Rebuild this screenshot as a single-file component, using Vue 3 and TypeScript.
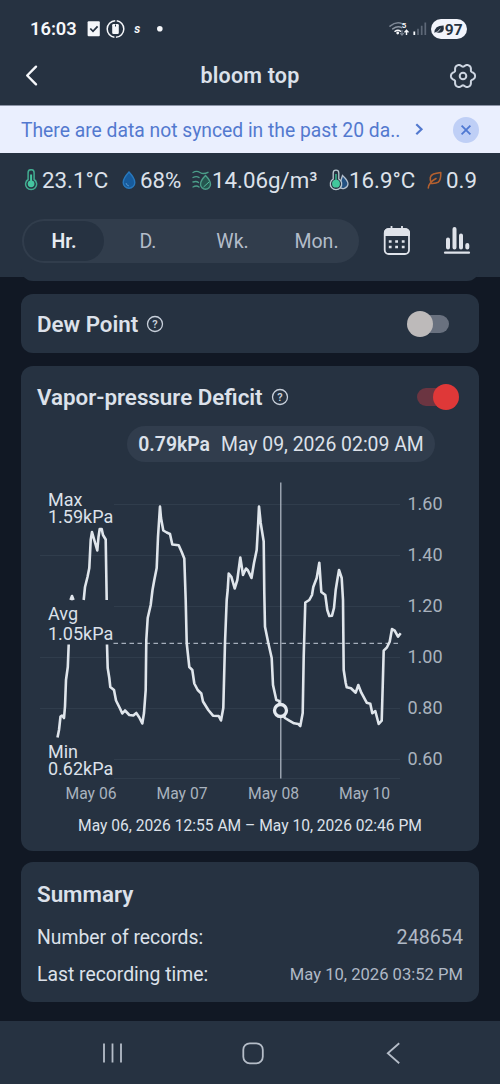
<script setup lang="ts">
import { computed, ref } from 'vue'

const tabs = ['Hr.', 'D.', 'Wk.', 'Mon.']
const activeTab = ref('Hr.')

const grid = [
  { y: 504, x: 114, label: '1.60' },
  { y: 555, x: 40, label: '1.40' },
  { y: 606, x: 114, label: '1.20' },
  { y: 657, x: 40, label: '1.00' },
  { y: 708, x: 40, label: '0.80' },
  { y: 759, x: 114, label: '0.60' },
]
const days = [
  { x: 91, label: 'May 06' },
  { x: 182, label: 'May 07' },
  { x: 273.5, label: 'May 08' },
  { x: 364.5, label: 'May 10' },
]
const series: number[][][] = [
  [[57.5, 737.5], [59, 730], [60.5, 716.5], [62, 715.5], [64, 718], [65, 706.5], [66, 680], [67.8, 667], [68.7, 644.5]],
  [[70.5, 600], [72, 596], [73.5, 600]],
  [[83.7, 600], [85, 587], [87.5, 577], [89.3, 568], [90.7, 540], [92, 532], [94.7, 541.5], [97.3, 550.5], [98.5, 537], [99.7, 529], [101.7, 529], [103, 535], [105.7, 539.5], [106.7, 600]],
  [
    [107, 644.5], [107.7, 668], [109.3, 678], [110.3, 687], [114, 690], [116, 700.5], [120, 708.5], [122.3, 713.5], [125, 710.5], [129.3, 715], [133.3, 715.5], [136.3, 713], [139.3, 717.5], [142.3, 723.5], [144, 713], [145.7, 690], [146.3, 640], [147.7, 618], [150.7, 605], [152.5, 590],
    [154.3, 580], [156.7, 568], [158, 537], [159.3, 517], [160, 506.5], [161, 518], [163.3, 530.5], [166.7, 532.5], [170, 534], [172.3, 544.5], [178.7, 545.3], [181.7, 552], [184.3, 558.5], [185.7, 600],
    [186.7, 643], [189.3, 667], [192.3, 670], [194.3, 683.5], [197.7, 690], [201.3, 693.5], [203, 701.5], [208.3, 710], [213, 715.7], [218.7, 716], [221, 720.5], [223.3, 708], [225, 643], [226.7, 600],
    [227.7, 590], [228.7, 573.5], [231.3, 576.7], [234.7, 588.5], [237.3, 580], [240.3, 557.5], [243, 575], [246, 568.5], [248, 570.5], [251.5, 578], [254, 563], [256.7, 550], [258, 526.7], [259, 506.5], [260.7, 523], [263.7, 541.5], [264.3, 593],
    [265, 626.7], [268.3, 643], [271.7, 658], [273, 685], [276.3, 700], [279.3, 701], [280.5, 710], [285, 718], [289.3, 720.7], [294, 723.3], [298.3, 724], [300.3, 726], [302.7, 713], [303.7, 657], [305.3, 602.5], [309.3, 600], [312, 595], [313.3, 587], [316.7, 578], [319.3, 562.7],
    [321.3, 592], [325.3, 595], [327.3, 610], [329.3, 616], [332, 615.7], [334, 608], [335.7, 590], [337.3, 580], [339, 570], [341.7, 578], [343, 600],
    [343.7, 670], [345.7, 683], [346.7, 687.3], [351, 688.3], [355.7, 692.7], [358.3, 685], [361.3, 692.7], [366.7, 702.7], [370.3, 703.7], [372.3, 713.3], [375.3, 711], [378.7, 724], [381.7, 720.7], [382.7, 686.7], [383.7, 650.7], [387, 647.3], [389.7, 641.7], [392, 629], [394.7, 630.7], [398, 636.7], [400.7, 633.3],
  ],
]
const linePath = computed(() =>
  series.map((part) => 'M' + part.map((p) => p.join(' ')).join('L')).join(''),
)

// Six-lobed cog outline
const gearPath = 'M' + Array.from({ length: 120 }, (_, i) => {
  const t = (i * Math.PI) / 60
  const r = 10.9 + 1.35 * Math.cos(6 * t) - 0.2 * Math.cos(12 * t)
  return `${(r * Math.cos(t)).toFixed(2)} ${(r * Math.sin(t)).toFixed(2)}`
}).join('L') + 'Z'
</script>

<template>
  <div class="screen">
    <header class="top">
      <div class="status">
        <span class="clock">16:03</span>
        <svg class="status-left" width="80" height="22" viewBox="85 18 80 22">
          <rect x="87.6" y="21.3" width="12.2" height="15" rx="1" fill="#f5f7fa" />
          <path d="M90.3 28.5l2.7 2.8 4.6-5" fill="none" stroke="#263241" stroke-width="1.8" />
          <circle cx="115.5" cy="29" r="8.3" fill="none" stroke="#f5f7fa" stroke-width="1.5" stroke-dasharray="24.5 1.57" stroke-dashoffset="12" />
          <rect x="112.2" y="24" width="6.6" height="10" rx="1.2" fill="#f5f7fa" />
          <path d="M115.5 24.5v2" stroke="#263241" stroke-width="1" />
          <text x="134.2" y="32.7" class="s-mark">s</text>
          <circle cx="159.8" cy="28.8" r="2.8" fill="#f5f7fa" />
        </svg>
        <svg class="status-right" width="80" height="22" viewBox="388 18 80 22">
          <g fill="none" stroke-linecap="round" stroke-width="1.5">
            <path d="M390 26.2q6-5 12 -2.600" stroke="#7d8795" />
            <path d="M392.7 28.9q5-3.600 9-1.200" stroke="#8d96a3" />
            <path d="M395 31.3q3-2.2 5.500 0" stroke="#f5f7fa" />
          </g>
          <circle cx="397.7" cy="33" r="1.4" fill="#f5f7fa" />
          <text x="401.8" y="28.2" class="wifi-gen">5</text>
          <path d="M402 30v5m-1.8-1.8l1.8 2 1.8-2" fill="none" stroke="#7d8795" stroke-width="1.1" />
          <path d="M406.5 35v-4.6m-2 2l2-2.2 2 2.2" fill="none" stroke="#f5f7fa" stroke-width="1.4" />
          <path d="M414.3 31.5v3.5" stroke="#f5f7fa" stroke-width="1.8" />
          <path d="M418 28.8V35M421.7 25.7V35M425.3 22.5V35" stroke="#5d6877" stroke-width="1.7" />
          <rect x="431" y="19" width="36" height="20" rx="10" fill="#f2f4fb" />
          <path d="M434.3 33q.2-7.5 9.3-7.4 1.3 7.4-4.3 7.2-2.2-.3-5 .2z" fill="#263241" />
          <path d="M434 33.3q3.8-.7 6.4-4.3" fill="none" stroke="#f2f4fb" stroke-width=".9" />
          <text x="444.8" y="34.6" class="battery">97</text>
        </svg>
      </div>
      <div class="title-bar">
        <svg width="16" height="24" viewBox="0 0 16 24"><path d="M12 2.700L3.2 11.500 12 20.300" fill="none" stroke="#f5f7fa" stroke-width="2.4" stroke-linejoin="round" stroke-linecap="round" /></svg>
        <h1>bloom top</h1>
        <svg width="28" height="28" viewBox="-14 -14 28 28">
          <g fill="none" stroke="#cdd5e1" stroke-width="2" stroke-linejoin="round">
            <path :d="gearPath" />
            <circle r="3.300" />
          </g>
        </svg>
      </div>
    </header>

    <div class="banner">
      <span class="banner-text">There are data not synced in the past 20 da..</span>
      <svg class="banner-arrow" width="12" height="16" viewBox="0 0 12 16"><path d="M3.300 2.300l5.2 5L3.300 12.300" fill="none" stroke="#5379cf" stroke-width="2.200" /></svg>
      <button class="close"><svg width="26" height="26" viewBox="0 0 26 26"><path d="M8.6 8.6l8.8 8.8M17.4 8.6l-8.8 8.8" stroke="#4f78d2" stroke-width="1.8" /></svg></button>
    </div>

    <section class="controls">
      <div class="metrics">
        <svg width="16" height="22" viewBox="23 168.500 16 22">
          <path d="M28.1 179v-6.8a3 3 0 0 1 6 0v6.8a5.5 5.5 0 1 1-6 0z" fill="#263241" stroke="#42ac91" stroke-width="1.5" />
          <path d="M31.1 174v8" stroke="#45c5a0" stroke-width="2" /><circle cx="31.1" cy="183.3" r="3.4" fill="#45c5a0" />
        </svg>
        <span class="m1">23.1°C</span>
        <svg class="i2" width="14" height="20" viewBox="122 169 14 20"><path d="M129 171q5.8 6.2 5.8 10.5a5.8 5.8 0 0 1-11.6 0Q123.200 177.200 129 171z" fill="#175b9c" stroke="#2778bd" stroke-width="1.4" /><path d="M126 182q.5 2.600 3 3" fill="none" stroke="#5797ce" stroke-width=".9" /></svg>
        <span class="m2">68%</span>
        <svg class="i3" width="20" height="22" viewBox="192 168 20 22">
          <g fill="none" stroke="#4b9d89" stroke-width="1.4" stroke-linecap="round">
            <path d="M193 171.500q3.500-2.200 7 0t8-.2M193 176.500q3.500-1.800 6 0M193 181q3.500-1.200 5.500 .5M193 186q3.500-2 6 0" />
            <path d="M205.500 174.500q5 5 5 8.800a5 5 0 0 1-10 0q0-3.800 5-8.800z" fill="#24554f" />
          </g>
          <path d="M203.500 186l5.500-5" stroke="#53bea0" stroke-width="1" />
        </svg>
        <span class="m3">14.06g/m³</span>
        <svg class="i4" width="20" height="22" viewBox="329 168 20 22">
          <path d="M342.500 174.500q5.500 5 5.500 8.500a5 5 0 0 1-9 2.500z" fill="#235181" stroke="#b3bfcd" stroke-width="1.300" />
          <path d="M333.200 178v-6a2.800 2.800 0 0 1 5.600 0v6a5.700 5.700 0 1 1-5.600 0z" fill="#263241" stroke="#b9c7cf" stroke-width="1.300" />
          <path d="M336 173v9" stroke="#35ad87" stroke-width="1.600" /><circle cx="336" cy="182.700" r="3.900" fill="#42c89c" />
        </svg>
        <span class="m4">16.9°C</span>
        <svg class="i5" width="16" height="20" viewBox="428.500 169 16 20"><path d="M432.800 182.500q-3-7.500 2.200-9.500 2.500-.8 7.300-1.500.2 7.500-2.500 9.700-2 1.500-7 1.300zM429.800 187q.3-5.500 7.700-9.500" fill="none" stroke="#b4602f" stroke-width="1.600" stroke-linecap="round" stroke-linejoin="round" /></svg>
        <span class="m5">0.9</span>
      </div>
      <div class="range">
        <div class="tabs">
          <button v-for="tab in tabs" :key="tab" :class="{ active: tab === activeTab }" @click="activeTab = tab">{{ tab }}</button>
        </div>
        <svg class="calendar" width="28" height="30" viewBox="383 226 28 30">
          <rect x="384.700" y="229" width="24.300" height="25" rx="4" fill="none" stroke="#dfe3ea" stroke-width="1.800" />
          <path d="M384 236v-3q0-4.500 4.500-4.500h17q4.500 0 4.500 4.500v3z" fill="#dfe3ea" />
          <path d="M391.500 226v4M402 226v4" stroke="#dfe3ea" stroke-width="1.800" />
          <path d="M388.800 241.500h2.800m3.600 0h2.800m3.800 0h2.800M388.800 247h2.800m3.600 0h2.800m3.800 0h2.800" stroke="#dfe3ea" stroke-width="2.600" />
        </svg>
        <svg class="bars" width="28" height="30" viewBox="443 226 28 30">
          <path d="M448 239.500v8M454.500 229v18.500M461 235.500v12M467.300 245v2.500" stroke="#dfe3ea" stroke-width="4" stroke-linecap="round" />
          <path d="M445 252.700h24" stroke="#dfe3ea" stroke-width="2.200" stroke-linecap="round" />
        </svg>
      </div>
    </section>

    <main>
      <div class="peek"></div>
      <section class="card dew">
        <h2>Dew Point</h2>
        <svg class="help" width="18" height="18" viewBox="0 0 18 18"><circle cx="9" cy="9" r="7.500" /><text x="9" y="13">?</text></svg>
        <span class="switch"><i></i></span>
      </section>

      <section class="card vpd">
        <div class="card-head">
          <h2>Vapor-pressure Deficit</h2>
          <svg class="help" width="18" height="18" viewBox="0 0 18 18"><circle cx="9" cy="9" r="7.500" /><text x="9" y="13">?</text></svg>
          <span class="switch on"><i></i></span>
        </div>
        <div class="reading"><b>0.79kPa</b><span>May 09, 2026 02:09 AM</span></div>
        <svg class="chart" width="458" height="370" viewBox="21 476 458 370">
          <g v-for="g in grid" :key="g.label">
            <path :d="`M${g.x} ${g.y + 0.5}H400`" class="grid-line" />
            <text x="407.500" :y="g.y + 5.800" class="y-label">{{ g.label }}</text>
          </g>
          <path d="M114 778.500H400" class="grid-line" />
          <path d="M113.500 643.300H401" class="avg-line" />
          <path d="M280.800 482.500V778.500" class="cursor" />
          <path :d="linePath" class="series" />
          <circle cx="280.500" cy="710.500" r="6" class="marker" />
          <g class="stat">
            <text x="48" y="505.700">Max</text><text x="48" y="522.800">1.59kPa</text>
            <text x="48" y="620">Avg</text><text x="48" y="639.500">1.05kPa</text>
            <text x="48" y="757.700">Min</text><text x="48" y="774.800">0.62kPa</text>
          </g>
          <text v-for="d in days" :key="d.label" :x="d.x" y="798.500" class="x-label">{{ d.label }}</text>
          <text x="250" y="830.800" class="span-label">May 06, 2026 12:55 AM – May 10, 2026 02:46 PM</text>
        </svg>
      </section>

      <section class="card summary">
        <h2>Summary</h2>
        <div class="row"><span>Number of records:</span><span class="count">248654</span></div>
        <div class="row"><span>Last recording time:</span><span class="time">May 10, 2026 03:52 PM</span></div>
      </section>
    </main>

    <nav>
      <svg width="24" height="24" viewBox="0 0 24 24"><path d="M4 2.500v19M12.500 2.500v19M21 2.500v19" /></svg>
      <svg width="24" height="24" viewBox="0 0 24 24"><rect x="2.300" y="2.300" width="19.500" height="20" rx="6.500" /></svg>
      <svg width="24" height="24" viewBox="0 0 24 24"><path d="M18.200 2.300L6.800 12.300l11.400 10" /></svg>
    </nav>
  </div>
</template>

<style>
body { margin: 0; background: #111824; }
</style>

<style scoped>
* { box-sizing: border-box; }
.screen { width: 500px; height: 1084px; display: flex; flex-direction: column; overflow: hidden; background: #111824; color: #dce1ea; font-family: Roboto, sans-serif; }
svg { display: block; flex: none; }
h1, h2 { margin: 0; font-weight: 600; }
button { border: 0; padding: 0; background: none; font: inherit; color: inherit; }
.top { height: 105px; background: #263241; }
.status { height: 57px; display: flex; align-items: center; padding: 0 32px 0 30px; }
.clock { width: 55px; font: 600 18.300px/22px Roboto, sans-serif; color: #f5f7fa; }
.status-left { margin-right: auto; }
.s-mark { font: italic 700 12px Roboto, sans-serif; fill: #f5f7fa; }
.wifi-gen { font: 700 8px Roboto, sans-serif; fill: #f5f7fa; }
.battery { font: 700 15.500px Roboto, sans-serif; fill: #263241; }
.title-bar { height: 38px; display: flex; align-items: center; justify-content: space-between; padding: 0 23px 0 24px; }
h1 { font-size: 21.500px; line-height: 28px; letter-spacing: .2px; padding-left: 11px; }
.banner { height: 48px; display: flex; align-items: center; padding-left: 21px; background: #eaeffe; border-top: 1px solid #8c94a6; color: #5379cf; }
.banner-text { width: 392px; white-space: nowrap; font-size: 19.300px; padding-top: 1px; }
.close { width: 26px; height: 26px; border-radius: 50%; background: #bfcff6; margin-left: 28px; }
.controls { height: 124px; background: #263241; }
.metrics { height: 53px; display: flex; align-items: center; padding-left: 23px; font-size: 22.300px; white-space: nowrap; }
.metrics span { flex: none; }
.i5 { margin-left: -1px; }
.m1 { width: 80px; margin-left: 3px; }
.m2 { width: 52px; margin-left: 4px; }
.m3 { width: 117px; }
.m4 { width: 79px; }
.m5 { margin-left: 3px; }
.range { display: flex; align-items: center; padding: 13px 0 0 22px; }
.tabs { width: 337px; height: 44px; border-radius: 22px; background: #313d4c; padding: 2px; display: grid; grid-template-columns: 80px 88px 81px 87px; }
.tabs button { color: #b3bcc9; font-size: 19.500px; border-radius: 20px; }
.tabs .active { background: #263241; color: #e7ebf1; font-weight: 600; }
.calendar { margin-left: 24px; }
.bars { margin-left: 32px; }
main { flex: 1; padding: 0 21px; }
.peek { height: 16px; margin-top: -12px; background: #263241; border-radius: 0 0 12px 12px; margin-bottom: 13px; }
.card { background: #263241; border-radius: 12px; }
h2 { font-size: 22.350px; line-height: 28px; white-space: nowrap; }
.dew { height: 59px; display: flex; align-items: center; padding: 1px 16px 0; margin-bottom: 13px; }
.help { margin-left: 8px; }
.help circle { fill: none; stroke: #c8d0db; stroke-width: 1.300; }
.help text { font: 600 11px Roboto, sans-serif; fill: #c8d0db; text-anchor: middle; }
.switch { position: relative; width: 42px; height: 26px; margin-left: auto; margin-right: 14px; display: flex; }
.switch::before { content: ''; position: absolute; right: 0; top: 4px; width: 34px; height: 18px; border-radius: 9px; background: #69717f; }
.switch i { position: relative; width: 26px; height: 26px; border-radius: 50%; background: #bdbaba; }
.switch.on { margin-right: 4px; justify-content: flex-end; }
.switch.on::before { right: auto; left: 0; background: #6b3541; }
.switch.on i { background: #df3838; }
.vpd { height: 485px; margin-bottom: 11px; }
.card-head { height: 60px; padding: 2px 16px 0; display: flex; align-items: center; }
.reading { width: 308px; height: 36px; margin-left: 106px; border-radius: 18px; background: #313d4d; display: flex; align-items: center; justify-content: center; gap: 11px; font-size: 19.400px; white-space: nowrap; }
.reading b { font-weight: 600; }
.chart { margin-top: 14px; }
.grid-line { stroke: #303d4c; stroke-width: 1; }
.avg-line { fill: none; stroke: #a5aebb; stroke-width: 1.200; stroke-dasharray: 4.500 3.500; }
.cursor { stroke: #b7bfca; stroke-width: 1.200; }
.series { fill: none; stroke: #dfe5eb; stroke-width: 2.600; stroke-linejoin: round; }
.marker { fill: #263241; stroke: #e4e9ef; stroke-width: 3.300; }
.y-label { font-size: 18px; fill: #a9b2be; }
.x-label { font-size: 15.700px; fill: #a9b2be; text-anchor: middle; }
.stat { font-size: 18px; fill: #dce1ea; }
.span-label { font-size: 15.600px; fill: #dce1ea; text-anchor: middle; }
.summary { height: 140px; padding: 18px 16px 0; }
.row { display: flex; align-items: center; justify-content: space-between; height: 37px; font-size: 19.350px; }
h2 + .row { margin-top: 11px; }
.count { color: #b0b9c6; font-size: 19.700px; }
.time { color: #b0b9c6; font-size: 16.600px; }
nav { height: 63px; background: #263241; display: flex; justify-content: space-between; padding: 20px 95px 0 100px; }
nav svg { fill: none; stroke: #b5bdc8; stroke-width: 1.800; }
</style>
